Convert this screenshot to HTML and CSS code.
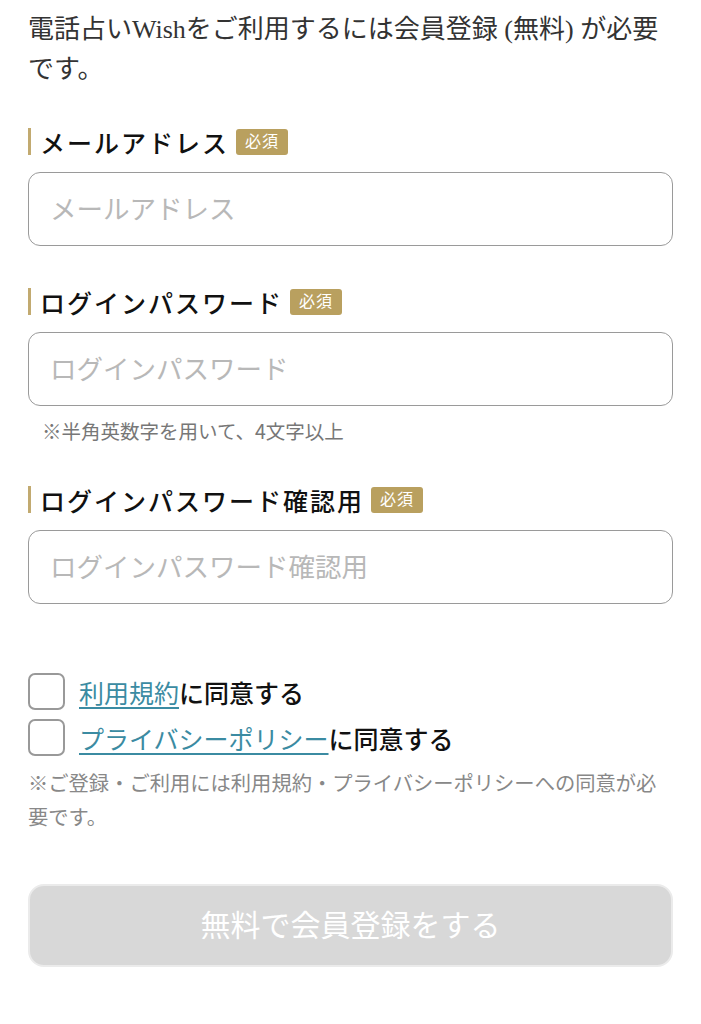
FILE: index.html
```html
<!DOCTYPE html>
<html lang="ja">
<head>
<meta charset="utf-8">
<title>会員登録</title>
<link rel="stylesheet" href="styles.css">
</head>
<body>
<main class="page">
  <p class="intro">電話占いWishをご利用するには会員登録 (無料) が必要です。</p>

  <div class="field">
    <div class="label-row"><span class="label">メールアドレス</span><span class="badge">必須</span></div>
    <div class="input">メールアドレス</div>
  </div>

  <div class="field">
    <div class="label-row"><span class="label">ログインパスワード</span><span class="badge">必須</span></div>
    <div class="input">ログインパスワード</div>
    <p class="hint">※半角英数字を用いて、4文字以上</p>
  </div>

  <div class="field">
    <div class="label-row"><span class="label">ログインパスワード確認用</span><span class="badge">必須</span></div>
    <div class="input">ログインパスワード確認用</div>
  </div>

  <div class="agree">
    <label class="check-row"><span class="box"></span><span class="check-text"><a class="link" href="#">利用規約</a>に同意する</span></label>
    <label class="check-row"><span class="box"></span><span class="check-text"><a class="link" href="#">プライバシーポリシー</a>に同意する</span></label>
    <p class="agree-note">※ご登録・ご利用には利用規約・プライバシーポリシーへの同意が必要です。</p>
  </div>

  <div class="submit">無料で会員登録をする</div>
</main>
</body>
</html>
```
FILE: styles.css
```css
* { box-sizing: border-box; }
body {
  margin: 0;
  background: #fff;
  font-family: "Liberation Serif", "Noto Sans CJK JP", serif;
  color: #222;
}
.page {
  padding: 10px 28px 40px;
}
.intro {
  margin: 0;
  font-size: 26px;
  line-height: 40px;
  color: #333;
}
.field {
  margin-top: 38px;
}
.field + .field {
  margin-top: 42px;
}
.label-row {
  display: flex;
  align-items: center;
  height: 27px;
}
.label {
  display: flex;
  align-items: center;
  height: 27px;
  border-left: 3px solid #c2aa70;
  padding-left: 9px;
  font-size: 25px;
  letter-spacing: 2px;
  font-weight: 500;
  color: #111;
}
.badge {
  margin-left: 7px;
  background: #b9a05f;
  color: #fff;
  font-size: 16px;
  line-height: 26px;
  height: 26px;
  padding: 0 9px;
  border-radius: 3px;
  letter-spacing: 1px;
}
.input {
  margin-top: 17px;
  height: 74px;
  border: 1.5px solid #9a9a9a;
  border-radius: 12px;
  padding: 0 0 3px 21px;
  display: flex;
  align-items: center;
  font-family: "Noto Sans CJK JP", sans-serif;
  font-size: 26.5px;
  color: #b8b8b8;
}
.hint {
  margin: 12px 0 0 14px;
  font-family: "Noto Sans CJK JP", sans-serif;
  font-size: 19.5px;
  line-height: 26px;
  color: #777;
}
.agree {
  margin-top: 69px;
  display: flex;
  flex-direction: column;
  gap: 9px;
}
.check-row {
  display: flex;
  align-items: center;
  gap: 14px;
}
.box {
  width: 37px;
  height: 37px;
  border: 2px solid #999;
  border-radius: 7px;
  flex: none;
}
.check-text {
  font-size: 25px;
  font-weight: 500;
  color: #111;
}
.link {
  color: #3b8ba2;
  font-weight: 400;
  text-decoration: underline;
  text-underline-offset: 4px;
  text-decoration-thickness: 1.5px;
}
.agree-note {
  margin: 0;
  font-family: "Noto Sans CJK JP", sans-serif;
  font-size: 20.3px;
  line-height: 34px;
  color: #888;
}
.submit {
  margin-top: 51px;
  height: 83px;
  border-radius: 16px;
  background: #d8d8d8;
  border: 2px solid #ebebeb;
  padding-bottom: 5px;
  display: flex;
  align-items: center;
  justify-content: center;
  font-family: "Noto Sans CJK JP", sans-serif;
  font-size: 30px;
  color: #fff;
}
```
